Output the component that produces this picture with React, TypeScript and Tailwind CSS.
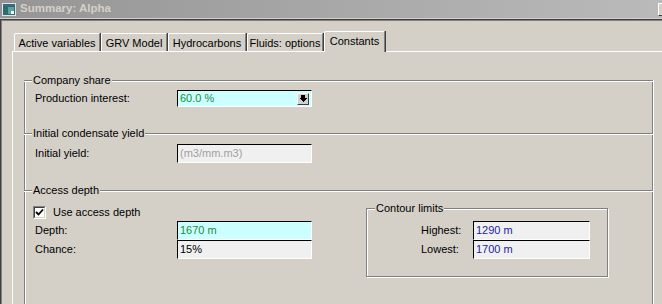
import type { ReactNode } from "react";

const tabs = [
  { label: "Active variables", w: "w-[86px]" },
  { label: "GRV Model", w: "w-[66px]" },
  { label: "Hydrocarbons", w: "w-[78px]" },
  { label: "Fluids: options", w: "w-[76px]" },
];

export default function App() {
  return (
    <div className="flex h-[304px] w-[662px] flex-col overflow-hidden bg-[#d4d0c8] font-['Liberation_Sans',Arial,sans-serif] text-[11px] text-black">
      {/* title bar */}
      <div className="flex h-[18px] shrink-0 items-center bg-linear-to-r from-[#959595] to-[#bababa] pl-[2px]">
        <WindowIcon />
        <span className="ml-[4px] text-[11.5px] font-bold text-[#d4d0c8]">Summary: Alpha</span>
        <div className="ml-auto h-[13px] w-[4px] border-l border-t border-b border-l-white border-t-white border-b-[#404040] bg-[#d4d0c8]" />
      </div>
      <div className="h-px shrink-0 bg-[#d4d0c8]" />

      <div className="flex-1 border-l border-t border-[#404040]">
        <div className="h-full border-l border-t border-[#808080] pl-[10px] pt-[10px]">
          <TabStrip />
          <div className="h-full w-[700px] border-l border-t border-white pl-[11px] pt-[28px]">
            <div className="w-[630px] border-l border-r border-l-[#808080] border-r-white">
              <div className="border-l border-r border-l-white border-r-[#808080]">
                <section className="h-[53px]">
                  <Caption>Company share</Caption>
                  <div className="mt-[3px] flex items-center pl-[9px]">
                    <span className="w-[142px]">Production interest:</span>
                    <Combo />
                  </div>
                </section>

                <section className="h-[57px]">
                  <Caption>Initial condensate yield</Caption>
                  <div className="mt-[4px] flex items-center pl-[9px]">
                    <span className="w-[142px]">Initial yield:</span>
                    <Edit className="w-[135px]">
                      <span className="text-[#a0a0a0]">(m3/mm.m3)</span>
                    </Edit>
                  </div>
                </section>

                <section className="h-[130px]">
                  <Caption>Access depth</Caption>
                  <div className="flex">
                    <div className="w-[286px]">
                      <div className="ml-[7px] mt-[9px] flex h-[13px] items-center gap-[7px]">
                        <CheckBox />
                        <span>Use access depth</span>
                      </div>
                      <div className="mt-[2px] flex items-center pl-[9px]">
                        <span className="w-[142px]">Depth:</span>
                        <Edit cyan className="w-[135px]">
                          <span className="text-[#238b3a]">1670 m</span>
                        </Edit>
                      </div>
                      <div className="flex items-center pl-[9px]">
                        <span className="w-[142px]">Chance:</span>
                        <Edit className="w-[135px]">15%</Edit>
                      </div>
                    </div>

                    <div className="ml-[54px] mt-[11px] h-[69px] w-[242px] border border-[#808080] shadow-[inset_1px_1px_0_white,1px_1px_0_white]">
                      <div className="-mt-[7px] ml-[8px] w-fit bg-[#d4d0c8] px-[1px] leading-[13px]">Contour limits</div>
                      <div className="mt-[6px] flex items-center pl-[54px]">
                        <span className="w-[52px]">Highest:</span>
                        <Edit className="w-[117px]">
                          <span className="text-[#1c1ca0]">1290 m</span>
                        </Edit>
                      </div>
                      <div className="flex items-center pl-[54px]">
                        <span className="w-[52px]">Lowest:</span>
                        <Edit className="w-[117px]">
                          <span className="text-[#1c1ca0]">1700 m</span>
                        </Edit>
                      </div>
                    </div>
                  </div>
                </section>
              </div>
            </div>
          </div>
        </div>
      </div>
    </div>
  );
}

function TabStrip() {
  return (
    <div className="flex items-end pl-[2px]">
      {tabs.map((t) => (
        <div
          key={t.label}
          className={`${t.w} mr-px flex h-[18px] items-center justify-center rounded-tl-[2px] border-l border-t border-r border-l-white border-t-white border-r-[#808080] pt-px shadow-[1px_0_0_#404040]`}
        >
          {t.label}
        </div>
      ))}
      <div className="relative z-10 -mb-px flex h-[21px] w-[61px] items-center justify-center rounded-tl-[2px] border-l border-t border-r border-l-white border-t-white border-r-[#808080] bg-[#d4d0c8] pb-[2px] shadow-[1px_0_0_#404040]">
        Constants
      </div>
    </div>
  );
}

function Caption({ children }: { children: ReactNode }) {
  return (
    <>
      <div className="-ml-[2px] -mr-px h-[2px] border-t border-b border-t-[#808080] border-b-white" />
      <div className="-mt-[8px] ml-[6px] w-fit bg-[#d4d0c8] px-[1px] leading-[13px]">{children}</div>
    </>
  );
}

function Edit({ children, cyan, className }: { children: ReactNode; cyan?: boolean; className?: string }) {
  return (
    <div
      className={`flex h-[19px] items-center border-t border-l border-r border-b border-t-black border-l-black border-r-white border-b-white pl-[2px] ${
        cyan ? "bg-[#ccffff]" : "bg-[#f0f0f0]"
      } ${className ?? ""}`}
    >
      {children}
    </div>
  );
}

function Combo() {
  return (
    <div className="flex h-[17px] w-[135px] items-center border-t border-l border-r border-b border-t-black border-l-black border-r-white border-b-white bg-[#ccffff] pl-[2px]">
      <span className="text-[#238b3a]">60.0 %</span>
      <div className="ml-auto mr-[2px] flex h-[12px] w-[12px] items-center justify-center border-t border-l border-r border-b border-t-white border-l-white border-r-[#404040] border-b-[#404040] bg-[#d4d0c8]">
        <svg width="8" height="8" viewBox="0 0 8 8" shapeRendering="crispEdges">
          <polygon points="2,0 6,0 6,3 8,3 4,7 0,3 2,3" fill="#000" />
        </svg>
      </div>
    </div>
  );
}

function CheckBox() {
  return (
    <div className="h-[13px] w-[13px] border-t border-l border-r border-b border-t-[#808080] border-l-[#808080] border-r-white border-b-white">
      <div className="flex h-full w-full items-center justify-center border-t border-l border-r border-b border-t-[#404040] border-l-[#404040] border-r-[#d4d0c8] border-b-[#d4d0c8] bg-white">
        <svg width="9" height="9" viewBox="0 0 9 9">
          <polyline points="1,4 3.5,6.5 8,1.5" fill="none" stroke="#000" strokeWidth="1.8" />
        </svg>
      </div>
    </div>
  );
}

function WindowIcon() {
  return (
    <svg width="14" height="13" viewBox="0 0 14 13" shapeRendering="crispEdges">
      <rect x="0" y="0" width="14" height="13" fill="#e4e4e4" />
      <rect x="1" y="1" width="12" height="2" fill="#3a6a8a" />
      <rect x="1" y="3" width="12" height="9" fill="#2c6e6e" />
      <rect x="6" y="4" width="6" height="7" fill="#5fa0a0" />
      <rect x="9" y="8" width="3" height="3" fill="#ffffff" />
    </svg>
  );
}
